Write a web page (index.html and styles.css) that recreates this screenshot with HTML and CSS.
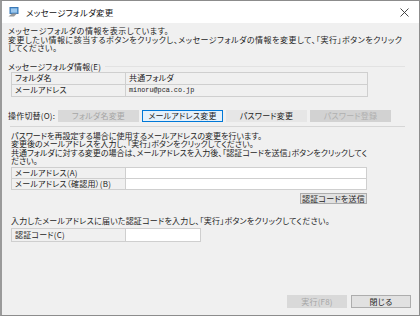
FILE: index.html
```html
<!DOCTYPE html>
<html lang="ja">
<head>
  <meta charset="UTF-8">
  <title>メッセージフォルダ変更</title>
  <link rel="stylesheet" href="styles.css">
</head>
<body>
  <div class="window">
    <div class="titlebar">
      <svg class="app-icon" width="11" height="10" viewBox="0 0 11 10">
        <rect x="2" y="0.5" width="8" height="6" fill="#5b9bd5" stroke="#3a78b5" stroke-width="1"/>
        <rect x="3" y="1.5" width="6" height="4" fill="#9cc8ee"/>
        <path d="M0.5 9.5 L4 6.5 L9 6.5 L6 9.5 Z" fill="#9a9a9a"/>
      </svg>
      <span class="title">メッセージフォルダ変更</span>
      <svg class="close" width="9" height="9" viewBox="0 0 9 9">
        <path d="M0.5 0.5 L8.5 8.5 M8.5 0.5 L0.5 8.5" stroke="#333" stroke-width="0.9"/>
      </svg>
    </div>

    <div class="content">
      <p class="intro">メッセージフォルダの情報を表示しています。<br>変更したい情報に該当するボタンをクリックし、メッセージフォルダの情報を変更して、「実行」ボタンをクリック<br>してください。</p>

      <div class="group-head">
        <span>メッセージフォルダ情報(E)</span>
        <span class="rule"></span>
      </div>
      <table class="grid info-grid">
        <tr><td class="label">フォルダ名</td><td>共通フォルダ</td></tr>
        <tr><td class="label">メールアドレス</td><td class="mono">minoru@pca.co.jp</td></tr>
      </table>

      <div class="switch-row">
        <span class="switch-label">操作切替(O):</span>
        <button class="btn disabled">フォルダ名変更</button>
        <button class="btn active">メールアドレス変更</button>
        <button class="btn plain">パスワード変更</button>
        <button class="btn disabled dark">パスワード登録</button>
      </div>

      <div class="separator"></div>

      <p class="desc">パスワードを再設定する場合に使用するメールアドレスの変更を行います。<br>変更後のメールアドレスを入力し、「実行」ボタンをクリックしてください。<br>共通フォルダに対する変更の場合は、メールアドレスを入力後、「認証コードを送信」ボタンをクリックしてく<br>ださい。</p>

      <table class="grid input-grid">
        <tr><td class="label">メールアドレス(A)</td><td class="field"></td></tr>
        <tr><td class="label">メールアドレス（確認用）(B)</td><td class="field"></td></tr>
      </table>
      <div class="send-row">
        <button class="btn send">認証コードを送信</button>
      </div>

      <p class="code-note">入力したメールアドレスに届いた認証コードを入力し、「実行」ボタンをクリックしてください。</p>
      <table class="grid code-grid">
        <tr><td class="label">認証コード(C)</td><td class="field"></td></tr>
      </table>
    </div>

    <div class="footer">
      <button class="btn disabled foot">実行(F8)</button>
      <button class="btn foot">閉じる</button>
    </div>
  </div>
</body>
</html>
```

FILE: styles.css
```css
:root {
  --bg: #f0f0f0;
  --text: #1e1e1e;
  --grid-line: #cfcfcf;
  --btn-bg: #e1e1e1;
  --btn-border: #adadad;
  --disabled-bg: #d9d9d9;
  --disabled-text: #a6a6a6;
  --accent: #0078d7;
  --accent-bg: #e5f1fb;
}

* {
  box-sizing: border-box;
  margin: 0;
  padding: 0;
}

body {
  width: 420px;
  height: 317px;
  overflow: hidden;
  background: #fff;
  font-family: "Noto Sans CJK JP", "Liberation Sans", sans-serif;
  font-size: 8px;
  font-feature-settings: "palt";
  letter-spacing: 0.2px;
  color: var(--text);
}

.window {
  width: 420px;
  height: 316px;
  background: var(--bg);
  border: 1px solid #8c8c8c;
  border-left: 2px solid #9a9a9a;
  display: flex;
  flex-direction: column;
}

.titlebar {
  height: 22px;
  flex: none;
  background: #fff;
  display: flex;
  align-items: center;
  padding: 0 10px 0 6px;
}

.app-icon {
  margin-right: 7px;
}

.title {
  font-size: 8.5px;
  color: #111;
  flex: 1;
}

.content {
  flex: 1;
  padding: 4px 14px 0 6px;
}

.intro {
  line-height: 8.5px;
  letter-spacing: 0.5px;
  margin-bottom: 9px;
}

.group-head {
  display: flex;
  align-items: center;
  height: 9px;
}

.rule {
  flex: 1;
  height: 1px;
  background: #e2e2e2;
  margin-left: 4px;
}

.grid {
  border-collapse: collapse;
  margin-left: 3px;
  table-layout: fixed;
}

.grid td {
  border: 1px solid var(--grid-line);
  height: 12px;
  padding: 0 3px;
  line-height: 10px;
  white-space: nowrap;
}

.grid td.label {
  width: 114px;
}

.info-grid {
  width: 357px;
  margin-top: 1px;
}

.mono {
  font-family: "Liberation Mono", monospace;
  font-size: 6.8px;
  letter-spacing: 0;
}

.grid td.field {
  background: #fff;
}

.switch-row {
  display: flex;
  align-items: center;
  margin-top: 13px;
  height: 12px;
}

.switch-label {
  width: 50px;
}

.btn {
  font-family: inherit;
  font-size: 8px;
  font-feature-settings: "palt";
  letter-spacing: 0.2px;
  color: var(--text);
  height: 12px;
  line-height: 10px;
  background: var(--btn-bg);
  border: 1px solid var(--btn-border);
  padding: 0;
}

.switch-row .btn {
  width: 81px;
  margin-right: 3px;
}

.btn.disabled {
  background: var(--disabled-bg);
  border-color: var(--disabled-bg);
  color: var(--disabled-text);
}

.btn.dark {
  background: #d2d2d2;
  border-color: #d2d2d2;
  color: #b0b0b0;
}

.btn.active {
  background: var(--accent-bg);
  border-color: var(--accent);
}

.btn.plain {
  background: #e6e6e6;
  border-color: #e6e6e6;
}

.separator {
  height: 1px;
  background: #d6d6d6;
  margin: 4px 0 0 2px;
}

.desc {
  line-height: 8.5px;
  letter-spacing: 0;
  margin: 5px 0 1px 3px;
}

.input-grid {
  width: 356px;
}

.input-grid td {
  height: 11px;
}

.send-row {
  width: 359px;
  display: flex;
  justify-content: flex-end;
  margin-top: 3px;
}

.btn.send {
  width: 67px;
  height: 11px;
}

.code-note {
  margin: 13px 0 3px 3px;
  line-height: 8px;
}

.code-grid {
  width: 190px;
}

.code-grid td {
  height: 13px;
}

.footer {
  display: flex;
  justify-content: flex-end;
  gap: 4px;
  padding: 0 8px 7px 0;
}

.btn.foot {
  width: 60px;
  height: 13px;
}
```
